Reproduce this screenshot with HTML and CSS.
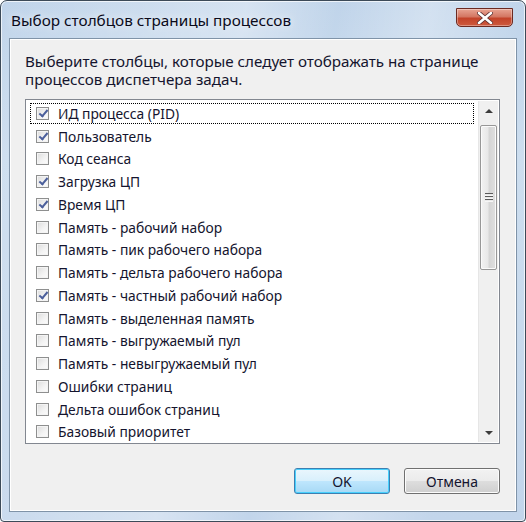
FILE: index.html
```html
<!DOCTYPE html>
<html lang="ru">
<head>
<meta charset="utf-8">
<link rel="stylesheet" href="styles.css">
</head>
<body>
<div class="window">
  <div class="titlebar">
    <span class="title">Выбор столбцов страницы процессов</span>
    <div class="close">
      <svg width="16" height="12" viewBox="0 0 16 12"><path d="M2 1 L14 11 M14 1 L2 11" stroke="#5a3030" stroke-width="4.2" stroke-linecap="round"/><path d="M2 1 L14 11 M14 1 L2 11" stroke="#fff" stroke-width="2.6" stroke-linecap="round"/></svg>
    </div>
  </div>
  <div class="client">
    <p class="intro">Выберите столбцы, которые следует отображать на странице процессов диспетчера задач.</p>
    <div class="listbox">
      <ul class="items">
        <li class="item focus"><span class="cb on"></span><span>ИД процесса (PID)</span></li>
        <li class="item"><span class="cb on"></span><span>Пользователь</span></li>
        <li class="item"><span class="cb"></span><span>Код сеанса</span></li>
        <li class="item"><span class="cb on"></span><span>Загрузка ЦП</span></li>
        <li class="item"><span class="cb on"></span><span>Время ЦП</span></li>
        <li class="item"><span class="cb"></span><span>Память - рабочий набор</span></li>
        <li class="item"><span class="cb"></span><span>Память - пик рабочего набора</span></li>
        <li class="item"><span class="cb"></span><span>Память - дельта рабочего набора</span></li>
        <li class="item"><span class="cb on"></span><span>Память - частный рабочий набор</span></li>
        <li class="item"><span class="cb"></span><span>Память - выделенная память</span></li>
        <li class="item"><span class="cb"></span><span>Память - выгружаемый пул</span></li>
        <li class="item"><span class="cb"></span><span>Память - невыгружаемый пул</span></li>
        <li class="item"><span class="cb"></span><span>Ошибки страниц</span></li>
        <li class="item"><span class="cb"></span><span>Дельта ошибок страниц</span></li>
        <li class="item"><span class="cb"></span><span>Базовый приоритет</span></li>
      </ul>
      <div class="scrollbar">
        <div class="arrow up"></div>
        <div class="track">
          <div class="thumb"><span class="grip"></span></div>
        </div>
        <div class="arrow down"></div>
      </div>
    </div>
    <div class="buttons">
      <button class="btn default">OK</button>
      <button class="btn">Отмена</button>
    </div>
  </div>
</div>
</body>
</html>
```
FILE: styles.css
```css
html, body {
  margin: 0;
  padding: 0;
  width: 526px;
  height: 522px;
  background: #fff;
  overflow: hidden;
}
.window {
  box-sizing: border-box;
  width: 526px;
  height: 522px;
  border: 1px solid #3c4a58;
  border-radius: 7px 7px 4px 4px;
  background:
    linear-gradient(100deg, rgba(255,255,255,0) 0%, rgba(255,255,255,0.35) 40%, rgba(255,255,255,0) 55%, rgba(255,255,255,0.3) 70%, rgba(255,255,255,0) 85%),
    linear-gradient(180deg, #c0d4ea 0%, #cddeef 30%, #c2d5eb 100%);
  box-shadow: inset 0 0 0 1px rgba(255,255,255,0.7);
  display: flex;
  flex-direction: column;
  padding: 0 8px 9px 8px;
  font-family: "Noto Sans", "Open Sans", sans-serif;
}
.titlebar {
  height: 37px;
  display: flex;
  align-items: flex-start;
  justify-content: space-between;
  flex: none;
}
.title {
  font-size: 15.3px;
  color: #0a0a1a;
  margin: 9px 0 0 2px;
  text-shadow: 0 0 8px rgba(255,255,255,0.9);
}
.close {
  width: 57px;
  height: 19px;
  margin: 7px 4px 0 0;
  box-sizing: border-box;
  border: 1px solid #6b2a22;
  border-radius: 0 0 5px 5px;
  background: linear-gradient(180deg, #e8a493 0%, #d47763 45%, #c3432a 55%, #cd5a3e 100%);
  box-shadow: inset 0 0 0 1px rgba(255,255,255,0.35);
  display: flex;
  align-items: center;
  justify-content: center;
}
.client {
  flex: 1;
  box-sizing: border-box;
  border: 1px solid #7f93a8;
  background: #f0f0f0;
  box-shadow: inset 0 0 0 1px #ffffff;
  display: flex;
  flex-direction: column;
  padding: 0 16px 17px 15px;
}
.intro {
  margin: 13px 0 0 0;
  font-size: 15.2px;
  line-height: 18px;
  color: #14142e;
}
.listbox {
  margin-top: 11px;
  height: 345px;
  box-sizing: border-box;
  border: 1px solid #828790;
  background: #fff;
  display: flex;
  padding: 1px;
}
.items {
  list-style: none;
  margin: 0;
  padding: 1px 0 0 2px;
  flex: 1;
}
.item {
  height: 22.75px;
  display: flex;
  align-items: center;
  font-size: 13.8px;
  color: #14142e;
  box-sizing: border-box;
  padding-left: 7px;
  margin-right: 3px;
}
.item.focus {
  outline: 1px dotted #000;
  outline-offset: -2px;
}
.cb {
  width: 13px;
  height: 13px;
  box-sizing: border-box;
  border: 1px solid #8e8f8f;
  background: linear-gradient(135deg, #dcdcdc 0%, #f4f4f4 60%, #fcfcfc 100%);
  box-shadow: inset 0 0 0 1px #f4f4f4;
  margin-right: 9px;
  position: relative;
  flex: none;
}
.cb.on::after {
  content: "";
  position: absolute;
  top: 0px;
  left: 4px;
  width: 3px;
  height: 7px;
  border: solid #4b5f9b;
  border-width: 0 2px 2px 0;
  transform: rotate(40deg);
  transform-origin: center;
}
.scrollbar {
  width: 19px;
  display: flex;
  flex-direction: column;
  background: #f0f0f0;
  border-left: 1px solid #e6e6e6;
}
.arrow {
  height: 19px;
  display: flex;
  align-items: center;
  justify-content: center;
  flex: none;
}
.arrow::before {
  content: "";
  width: 0;
  height: 0;
  border-left: 4px solid transparent;
  border-right: 4px solid transparent;
}
.arrow.up::before { border-bottom: 4px solid #3c3c3c; }
.arrow.down::before { border-top: 4px solid #3c3c3c; }
.track {
  flex: 1;
  padding: 5px 0 0 0;
}
.thumb {
  margin: 0 1px;
  height: 145px;
  box-sizing: border-box;
  border: 1px solid #979797;
  border-radius: 2px;
  background: linear-gradient(90deg, #f2f2f2 0%, #e8e8e8 45%, #d5d5d5 55%, #e0e0e0 100%);
  box-shadow: inset 0 0 0 1px #fafafa;
  display: flex;
  align-items: center;
  justify-content: center;
}
.grip {
  width: 8px;
  height: 9px;
  background: repeating-linear-gradient(180deg, #5b5b5b 0 1px, #e9e9e9 1px 2px, #f6f6f6 2px 3px);
}
.buttons {
  margin-top: auto;
  display: flex;
  justify-content: flex-end;
  gap: 14px;
}
.btn {
  width: 96px;
  height: 26px;
  box-sizing: border-box;
  border: 1px solid #707070;
  border-radius: 3px;
  background: linear-gradient(180deg, #f2f2f2 0%, #ebebeb 48%, #dddddd 52%, #cfcfcf 100%);
  box-shadow: inset 0 0 0 1px #fcfcfc;
  font-family: "Noto Sans", "Open Sans", sans-serif;
  font-size: 14px;
  color: #14142e;
  padding: 0;
}
.btn.default {
  border-color: #3c7fb1;
  background: linear-gradient(180deg, #eaf6fd 0%, #d9f0fc 48%, #bee6fd 52%, #a7d9f5 100%);
  box-shadow: inset 0 0 0 1px #48d0fd;
}
```
